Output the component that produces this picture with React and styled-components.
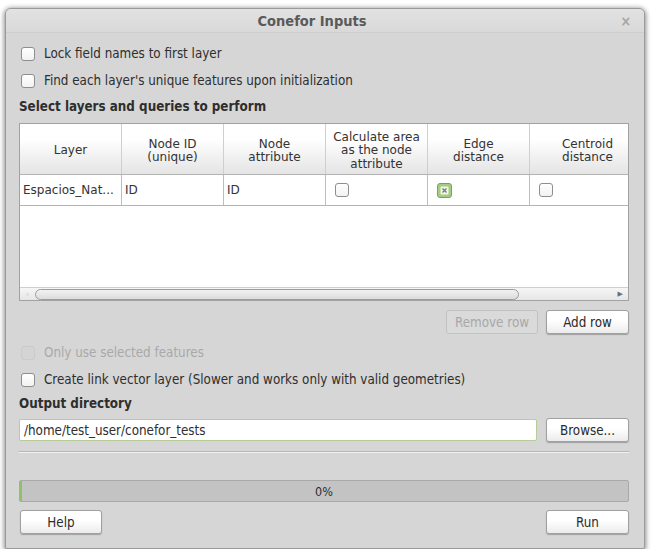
import React from "react";
import styled, { createGlobalStyle } from "styled-components";

const GlobalStyle = createGlobalStyle`
  html, body {
    margin: 0;
    padding: 0;
    background: #ffffff;
  }
  body {
    font-family: "DejaVu Sans Condensed", "DejaVu Sans", sans-serif;
    font-size: 13.3px;
    color: #2e2e2e;
  }
`;

const Window = styled.div`
  margin: 8px 0 0 5px;
  width: 640px;
  height: 541px;
  box-sizing: border-box;
  background: #d6d6d6;
  border: 1px solid #9a9a9a;
  border-radius: 6px 6px 2px 2px;
  box-shadow: 0 1px 5px 1px rgba(0, 0, 0, 0.45);
  display: flex;
  flex-direction: column;
  overflow: hidden;
`;

const TitleBar = styled.div`
  height: 23px;
  flex: none;
  display: flex;
  align-items: center;
  justify-content: center;
  position: relative;
  padding-right: 26px;
  background: linear-gradient(#e2e2e2, #d9d9d9);
  border-bottom: 1px solid #cdcdcd;
  font-weight: bold;
  font-size: 14.5px;
  color: #5a5a5a;
`;

const CloseBtn = styled.span`
  position: absolute;
  right: 13px;
  top: 4px;
  font-size: 14px;
  font-weight: bold;
  color: #a6a6a6;
`;

const Content = styled.div`
  flex: 1;
  display: flex;
  flex-direction: column;
  padding: 7px 15px 0 13px;
`;

const CheckRow = styled.label`
  height: 27px;
  margin-top: ${(p) => p.$mt || 0}px;
  display: flex;
  align-items: center;
  gap: 9px;
  padding-left: 2px;
  color: ${(p) => (p.$disabled ? "#a9a9a9" : "#2e2e2e")};
`;

const Box = styled.span`
  width: 12px;
  height: 12px;
  flex: none;
  border: 1px solid ${(p) => (p.$disabled ? "#cbcbcb" : "#8e8e8e")};
  border-radius: 3px;
  background: ${(p) => (p.$disabled ? "#d4d4d4" : "linear-gradient(#ffffff, #f2f2f2)")};
`;

const SectionTitle = styled.div`
  height: ${(p) => p.$h}px;
  display: flex;
  align-items: center;
  font-weight: bold;
`;

const Table = styled.div`
  margin-top: 5px;
  height: 178px;
  box-sizing: border-box;
  border: 1px solid #a2a2a2;
  background: #ffffff;
  display: flex;
  flex-direction: column;
  overflow: hidden;
  font-family: "DejaVu Sans", sans-serif;
  font-size: 12px;
  color: #333;
`;

const Row = styled.div`
  display: grid;
  grid-template-columns: repeat(5, 102px) 116px;
  height: ${(p) => p.$h}px;
  flex: none;
  border-bottom: 1px solid #b4b4b4;
  background: ${(p) => (p.$head ? "linear-gradient(#ffffff 30%, #e4e4e4)" : "#ffffff")};
`;

const HeadCell = styled.div`
  border-right: 1px solid #cfcfcf;
  display: flex;
  align-items: center;
  justify-content: center;
  text-align: center;
  line-height: 13.5px;
  padding-top: 4px;
  white-space: pre;
`;

const Cell = styled.div`
  border-right: 1px solid #bdbdbd;
  display: flex;
  align-items: center;
  padding: 0 ${(p) => (p.$check ? 9 : 3)}px;
  white-space: nowrap;
  overflow: hidden;
`;

const TableBody = styled.div`
  flex: 1;
`;

const ScrollBar = styled.div`
  height: 12px;
  flex: none;
  background: linear-gradient(#f6f6f6, #e6e6e6);
  border-top: 1px solid #cfcfcf;
  display: flex;
  align-items: center;
  padding: 0 5px 0 6px;
  gap: 6px;
  font-size: 8px;
  color: #c8c8c8;
`;

const Handle = styled.div`
  width: 484px;
  height: 11px;
  box-sizing: border-box;
  border: 1px solid #9c9c9c;
  border-radius: 6px;
  background: linear-gradient(#f2f2f2, #dcdcdc);
`;

const Arrow = styled.span`
  margin-left: auto;
  color: ${(p) => p.$c};
  font-size: 7px;
`;

const ButtonRow = styled.div`
  display: flex;
  align-items: center;
  gap: 8px;
  margin-top: ${(p) => p.$mt}px;
  justify-content: ${(p) => p.$justify || "flex-end"};
  padding-left: ${(p) => p.$pl || 0}px;
`;

const Button = styled.button`
  height: 24px;
  width: ${(p) => p.$w}px;
  box-sizing: border-box;
  font-family: "DejaVu Sans Condensed", "DejaVu Sans", sans-serif;
  font-size: 13.3px;
  color: ${(p) => (p.disabled ? "#a8a8a8" : "#2a2a2a")};
  border: 1px solid ${(p) => (p.disabled ? "#c2c2c2" : "#a0a0a0")};
  border-radius: 3px;
  background: ${(p) =>
    p.disabled ? "#dadada" : "linear-gradient(#ffffff 40%, #ececec)"};
  box-shadow: ${(p) => (p.disabled ? "none" : "0 1px 1px rgba(0,0,0,0.25)")};
  padding: 0;
  flex: none;
`;

const InputRow = styled.div`
  display: flex;
  align-items: center;
  gap: 9px;
  margin-top: 5px;
`;

const TextInput = styled.div`
  flex: 1;
  height: 22px;
  box-sizing: border-box;
  border: 1px solid #b8cc9a;
  border-radius: 2px;
  background: #ffffff;
  display: flex;
  align-items: center;
  padding-left: 4px;
`;

const Separator = styled.div`
  margin-top: 9px;
  height: 1px;
  background: #b6b6b6;
  border-bottom: 1px solid #f2f2f2;
`;

const Progress = styled.div`
  margin-top: 27px;
  height: 22px;
  box-sizing: border-box;
  border: 1px solid #a9a9a9;
  border-radius: 2px;
  background: #c3c3c3;
  display: flex;
  align-items: center;
  justify-content: center;
  position: relative;
  font-size: 12.5px;
`;

const ProgressFill = styled.div`
  position: absolute;
  left: 0;
  top: 0;
  bottom: 0;
  width: 2px;
  background: #8fc06a;
`;

function CheckedBox() {
  return (
    <svg width="15" height="15" viewBox="0 0 15 15" style={{ flex: "none" }}>
      <rect x="0.5" y="0.5" width="14" height="14" rx="2.5" fill="#a4cd82" stroke="#79a457" />
      <rect x="3.5" y="3.5" width="8" height="8" rx="1" fill="#f2f7ee" />
      <path d="M5.5 5.5 L9.5 9.5 M9.5 5.5 L5.5 9.5" stroke="#7a7a7a" strokeWidth="1.4" />
    </svg>
  );
}

const headers = [
  "Layer",
  "Node ID\n(unique)",
  "Node\nattribute",
  "Calculate area\nas the node\nattribute",
  "Edge\ndistance",
  "Centroid\ndistance",
];

export default function App() {
  return (
    <>
      <GlobalStyle />
      <Window>
        <TitleBar>
          Conefor Inputs
          <CloseBtn>×</CloseBtn>
        </TitleBar>
        <Content>
          <CheckRow>
            <Box />
            Lock field names to first layer
          </CheckRow>
          <CheckRow>
            <Box />
            Find each layer's unique features upon initialization
          </CheckRow>
          <SectionTitle $h={24}>Select layers and queries to perform</SectionTitle>
          <Table>
            <Row $head $h={50}>
              {headers.map((h) => (
                <HeadCell key={h}>{h}</HeadCell>
              ))}
            </Row>
            <Row $h={30}>
              <Cell>Espacios_Nat...</Cell>
              <Cell>ID</Cell>
              <Cell>ID</Cell>
              <Cell $check>
                <Box />
              </Cell>
              <Cell $check>
                <CheckedBox />
              </Cell>
              <Cell $check>
                <Box />
              </Cell>
            </Row>
            <TableBody />
            <ScrollBar>
              <span>‹</span>
              <Handle />
              <Arrow $c="#707070">▶</Arrow>
            </ScrollBar>
          </Table>
          <ButtonRow $mt={9}>
            <Button $w={92} disabled>
              Remove row
            </Button>
            <Button $w={83}>Add row</Button>
          </ButtonRow>
          <CheckRow $mt={5} $disabled>
            <Box $disabled />
            Only use selected features
          </CheckRow>
          <CheckRow>
            <Box />
            Create link vector layer (Slower and works only with valid geometries)
          </CheckRow>
          <SectionTitle $h={20}>Output directory</SectionTitle>
          <InputRow>
            <TextInput>/home/test_user/conefor_tests</TextInput>
            <Button $w={83}>Browse...</Button>
          </InputRow>
          <Separator />
          <Progress>
            <ProgressFill />
            0%
          </Progress>
          <ButtonRow $mt={8} $justify="space-between" $pl={1}>
            <Button $w={82}>Help</Button>
            <Button $w={83}>Run</Button>
          </ButtonRow>
        </Content>
      </Window>
    </>
  );
}
